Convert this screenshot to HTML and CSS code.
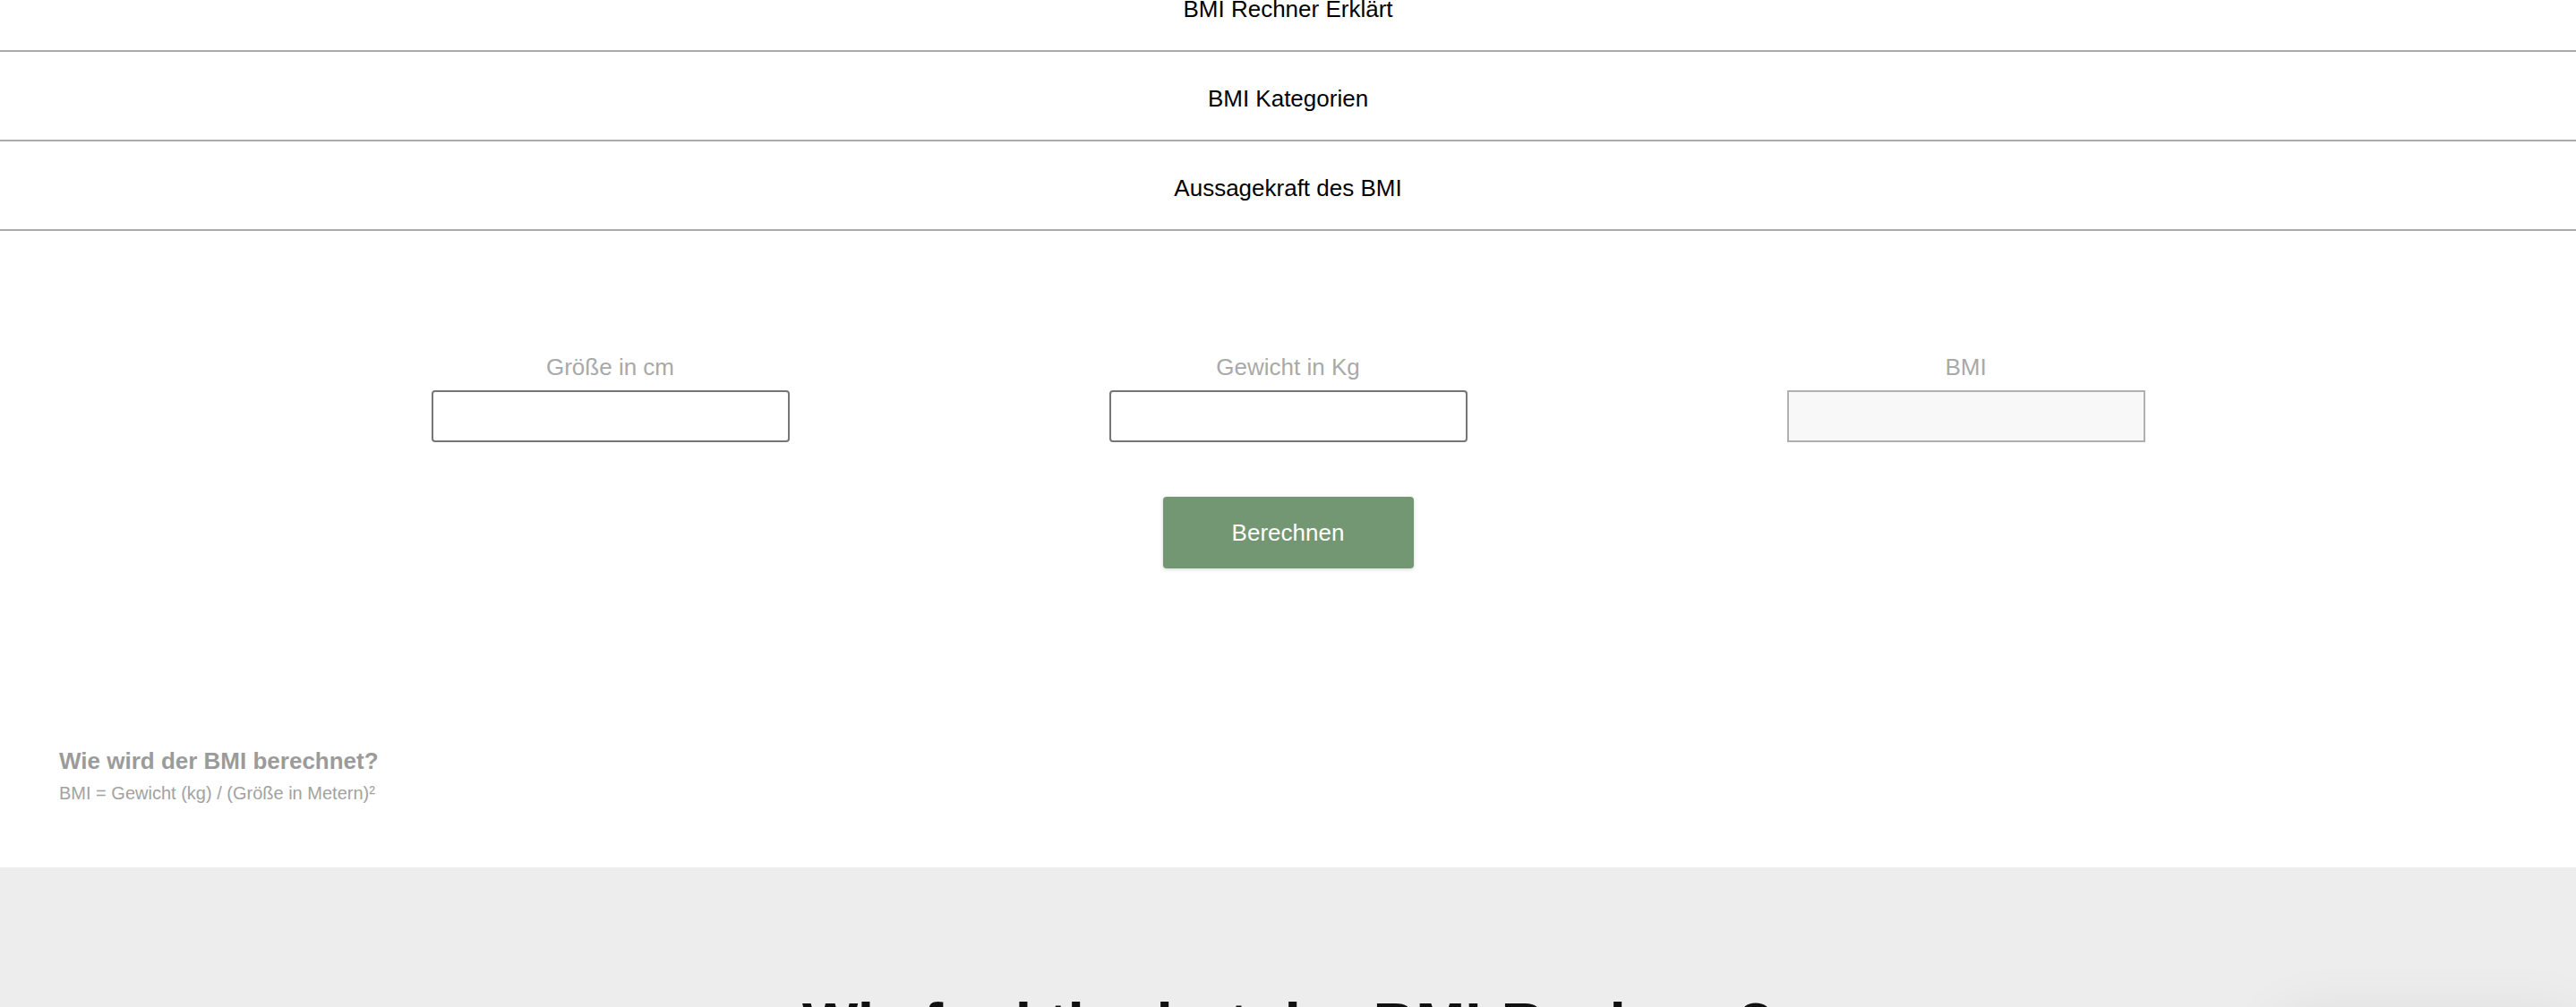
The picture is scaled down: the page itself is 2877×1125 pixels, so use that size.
FILE: index.html
```html
<!DOCTYPE html>
<html lang="de">
<head>
<meta charset="utf-8">
<title>BMI Rechner</title>
<link rel="stylesheet" href="styles.css">
</head>
<body>
<nav class="tabs">
  <div class="tab tab-first">BMI Rechner Erklärt</div>
  <div class="tab">BMI Kategorien</div>
  <div class="tab">Aussagekraft des BMI</div>
</nav>

<section class="calc">
  <div class="fields">
    <div class="field">
      <label class="field-label" for="groesse">Größe in cm</label>
      <input class="field-input" id="groesse" type="text">
    </div>
    <div class="field">
      <label class="field-label" for="gewicht">Gewicht in Kg</label>
      <input class="field-input" id="gewicht" type="text">
    </div>
    <div class="field">
      <label class="field-label" for="bmi">BMI</label>
      <input class="field-input field-readonly" id="bmi" type="text" readonly>
    </div>
  </div>
  <div class="actions">
    <button class="btn" type="button">Berechnen</button>
  </div>
</section>

<section class="formula">
  <h3 class="formula-title">Wie wird der BMI berechnet?</h3>
  <p class="formula-text">BMI = Gewicht (kg) / (Größe in Metern)²</p>
</section>

<section class="info">
  <h2 class="info-title">Wie funktioniert der BMI-Rechner?</h2>
</section>

<div class="floating"></div>
</body>
</html>
```

FILE: styles.css
```css
html, body {
  margin: 0;
  padding: 0;
  background: #ffffff;
  font-family: "Liberation Sans", Arial, Helvetica, sans-serif;
  color: #000;
  overflow: hidden;
}

.tabs {
  display: flex;
  flex-direction: column;
  margin-top: -42px;
}

.tab {
  padding: 37px 0 31px;
  line-height: 30px;
  font-size: 26px;
  text-align: center;
  color: #000;
  border-bottom: 2px solid #ababab;
}

.calc {
  padding-top: 137px;
}

.fields {
  display: grid;
  grid-template-columns: repeat(3, 757px);
  justify-content: center;
}

.field {
  display: flex;
  flex-direction: column;
  align-items: center;
}

.field-label {
  font-size: 26px;
  line-height: 30px;
  color: #a9a9a9;
  margin-bottom: 11px;
}

.field-input {
  box-sizing: border-box;
  width: 400px;
  height: 58px;
  border: 2px solid #767676;
  border-radius: 4px;
  background: #fff;
  font-family: inherit;
  font-size: 26px;
  padding: 0 10px;
  margin: 0;
}

.field-readonly {
  border-color: #b0b0b0;
  border-radius: 0;
  background: #f8f8f8;
}

.actions {
  display: flex;
  justify-content: center;
  margin-top: 61px;
}

.btn {
  width: 280px;
  height: 80px;
  border: none;
  border-radius: 4px;
  background: #749773;
  color: #fff;
  font-family: inherit;
  font-size: 26px;
  box-shadow: 0 1px 4px rgba(0, 0, 0, 0.18);
  cursor: pointer;
}

.formula {
  padding: 200px 0 0 66px;
}

.formula-title {
  margin: 0;
  font-size: 26px;
  line-height: 30px;
  font-weight: bold;
  color: #9b9b9b;
}

.formula-text {
  margin: 9px 0 0;
  font-size: 20px;
  line-height: 24px;
  color: #a2a2a2;
}

.info {
  margin-top: 71px;
  background: #ededed;
  padding: 135px 0 300px;
}

.info-title {
  margin: 0;
  text-align: center;
  font-size: 66px;
  line-height: 80px;
  font-weight: bold;
  color: #111;
}

.floating {
  position: fixed;
  right: 0;
  top: 1140px;
  width: 330px;
  height: 120px;
  border-radius: 12px;
  background: #e4e4e4;
  box-shadow: 0 0 70px rgba(0, 0, 0, 0.09);
}
```
